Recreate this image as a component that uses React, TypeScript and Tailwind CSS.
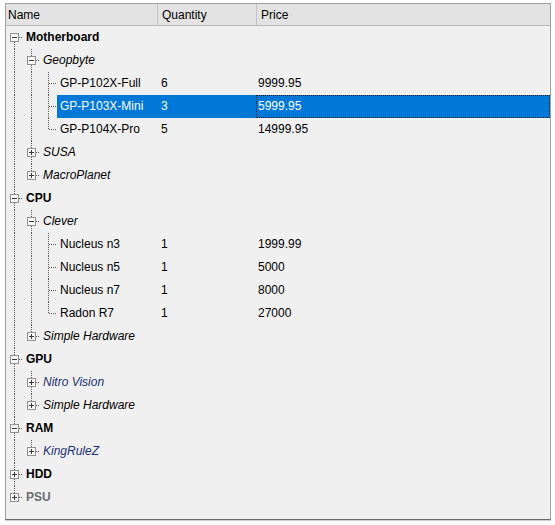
import React from "react";

type Kind = "cat" | "vendor" | "item";

type Node = {
  name: string;
  kind: Kind;
  qty?: string;
  price?: string;
  open?: boolean;
  tone?: "blue" | "gray";
  selected?: boolean;
  children?: Node[];
};

const tree: Node[] = [
  {
    name: "Motherboard",
    kind: "cat",
    open: true,
    children: [
      {
        name: "Geopbyte",
        kind: "vendor",
        open: true,
        children: [
          { name: "GP-P102X-Full", kind: "item", qty: "6", price: "9999.95" },
          { name: "GP-P103X-Mini", kind: "item", qty: "3", price: "5999.95", selected: true },
          { name: "GP-P104X-Pro", kind: "item", qty: "5", price: "14999.95" },
        ],
      },
      { name: "SUSA", kind: "vendor", children: [{ name: "", kind: "item" }] },
      { name: "MacroPlanet", kind: "vendor", children: [{ name: "", kind: "item" }] },
    ],
  },
  {
    name: "CPU",
    kind: "cat",
    open: true,
    children: [
      {
        name: "Clever",
        kind: "vendor",
        open: true,
        children: [
          { name: "Nucleus n3", kind: "item", qty: "1", price: "1999.99" },
          { name: "Nucleus n5", kind: "item", qty: "1", price: "5000" },
          { name: "Nucleus n7", kind: "item", qty: "1", price: "8000" },
          { name: "Radon R7", kind: "item", qty: "1", price: "27000" },
        ],
      },
      { name: "Simple Hardware", kind: "vendor", children: [{ name: "", kind: "item" }] },
    ],
  },
  {
    name: "GPU",
    kind: "cat",
    open: true,
    children: [
      { name: "Nitro Vision", kind: "vendor", tone: "blue", children: [{ name: "", kind: "item" }] },
      { name: "Simple Hardware", kind: "vendor", children: [{ name: "", kind: "item" }] },
    ],
  },
  {
    name: "RAM",
    kind: "cat",
    open: true,
    children: [{ name: "KingRuleZ", kind: "vendor", tone: "blue", children: [{ name: "", kind: "item" }] }],
  },
  { name: "HDD", kind: "cat", children: [{ name: "", kind: "item" }] },
  { name: "PSU", kind: "cat", tone: "gray", children: [{ name: "", kind: "item" }] },
];

type Row = {
  node: Node;
  level: number;
  rails: boolean[]; // ancestors that still have siblings below
  last: boolean;
  first: boolean;
};

function flatten(nodes: Node[], level: number, rails: boolean[], out: Row[]) {
  nodes.forEach((node, i) => {
    const last = i === nodes.length - 1;
    out.push({ node, level, rails, last, first: level === 0 && i === 0 });
    if (node.open && node.children) flatten(node.children, level + 1, [...rails, !last], out);
  });
  return out;
}

const DOT = "#5b5b5b";

function Rail() {
  return (
    <svg width="17" height="23" className="shrink-0" shapeRendering="crispEdges">
      <line x1="8.5" y1="0" x2="8.5" y2="23" stroke={DOT} strokeDasharray="1 1" />
    </svg>
  );
}

function Joint({ first, last, kids, open }: { first: boolean; last: boolean; kids: boolean; open?: boolean }) {
  return (
    <svg width="17" height="23" className="shrink-0" shapeRendering="crispEdges">
      {!first && <line x1="8.5" y1="0" x2="8.5" y2="12" stroke={DOT} strokeDasharray="1 1" />}
      {!last && <line x1="8.5" y1="12" x2="8.5" y2="23" stroke={DOT} strokeDasharray="1 1" />}
      <line x1={kids ? 13 : 9} y1="11.5" x2="17" y2="11.5" stroke={DOT} strokeDasharray="1 1" />
      {kids && (
        <g>
          <rect x="4.5" y="7.5" width="8" height="8" fill="#f7f7f7" stroke="#919191" />
          <line x1="6" y1="11.5" x2="11" y2="11.5" stroke="#3a3a3a" />
          {!open && <line x1="8.5" y1="9" x2="8.5" y2="14" stroke="#3a3a3a" />}
        </g>
      )}
    </svg>
  );
}

function TreeRow({ row }: { row: Row }) {
  const { node, rails, last, first } = row;
  const kids = !!node.children;
  const sel = !!node.selected;

  const label = node.kind === "cat" ? "font-bold" : node.kind === "vendor" ? "italic" : "";
  const tone = sel
    ? "text-white"
    : node.tone === "blue"
      ? "text-[#1c3172]"
      : node.tone === "gray"
        ? "text-[#6d6d6d]"
        : "text-black";

  return (
    <div className="flex h-[23px] items-stretch">
      <div className="flex w-[151px] shrink-0">
        {rails.map((r, i) => (r ? <Rail key={i} /> : <div key={i} className="w-[17px] shrink-0" />))}
        <Joint first={first} last={last} kids={kids} open={node.open} />
        <div className={`flex flex-1 items-center whitespace-nowrap pl-[3px] pb-[1px] ${sel ? "bg-[#0078d7]" : ""}`}>
          <span className={`${label} ${tone}`}>{node.name}</span>
        </div>
      </div>
      <div className={`flex w-[99px] shrink-0 items-center pl-[4px] pb-[1px] ${sel ? "bg-[#0078d7] text-white" : ""}`}>
        {node.qty}
      </div>
      <div
        className={`flex flex-1 items-center pb-[1px] ${
          sel ? "border border-dotted border-[#1b1b1b] bg-[#0078d7] pl-[1px] text-white" : "pl-[2px]"
        }`}
      >
        {node.price}
      </div>
    </div>
  );
}

export default function App() {
  const rows = flatten(tree, 0, [], []);

  return (
    <div className="min-h-screen bg-white pt-[3px] pl-[5px] font-['Liberation_Sans',Arial,sans-serif] text-[12px] text-black">
      <div className="flex h-[517px] w-[546px] flex-col overflow-hidden border border-[#a0a0a0] border-b-[#6b6b6b] bg-[#f0f0f0] shadow-[0_1px_0_#cfcfcf]">
        {/* column header */}
        <div className="flex h-[22px] shrink-0 border-b border-[#b9b9b9] bg-[#e3e3e3]">
          <div className="flex w-[152px] items-center border-r border-[#c4c4c4] pl-[2px]">Name</div>
          <div className="flex w-[99px] items-center border-r border-[#c4c4c4] pl-[4px]">Quantity</div>
          <div className="flex flex-1 items-center pl-[4px]">Price</div>
        </div>

        {/* rows */}
        <div className="flex flex-col">
          {rows.map((r, i) => (
            <TreeRow key={i} row={r} />
          ))}
        </div>
      </div>
    </div>
  );
}
